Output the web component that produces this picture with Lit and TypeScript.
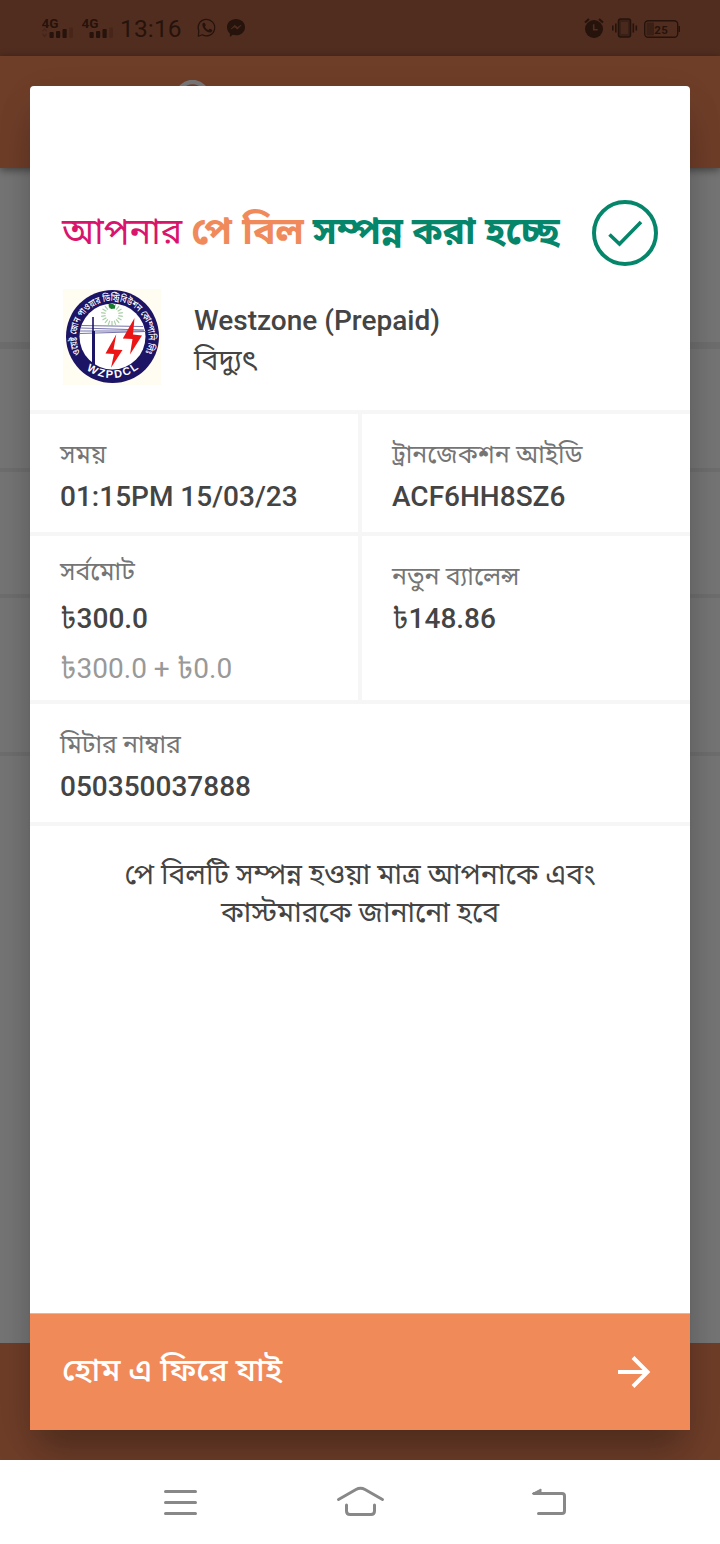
import { LitElement, html, css, svg } from "lit";
import { customElement, property } from "lit/decorators.js";

@customElement("signal-bars")
class SignalBars extends LitElement {
  @property({ type: Boolean }) marker = false;
  static styles = css`
    :host { display: block; width: 32px; height: 24px; }
    svg { display: block; }
    text { font: 700 13.5px Roboto, sans-serif; fill: #26130b; }
  `;
  render() {
    return html`<svg width="32" height="24" viewBox="0 0 32 24">
      <text x="-0.5" y="12" textLength="17" lengthAdjust="spacingAndGlyphs">4G</text>
      <g fill="#26130b">
        <rect x="7.500" y="16" width="4.200" height="6" rx="1" />
        <rect x="14" y="15" width="4.200" height="7" rx="1" />
        <rect x="20.500" y="13" width="4.200" height="9" rx="1" />
      </g>
      <rect x="27.300" y="11.500" width="3.600" height="10.500" rx="1" fill="#472619" />
      ${this.marker ? svg`<path d="M0.5 15l2-2 2 2M0.5 18l2 2.500 2-2.500" fill="none" stroke="#45251a" stroke-width="1.400"/>` : ""}
    </svg>`;
  }
}

@customElement("status-bar")
class StatusBar extends LitElement {
  static styles = css`
    :host { display: flex; height: 56px; box-sizing: border-box; padding: 0 40px 0 42px; background: #512d20; color: #26130b; font-family: Roboto, sans-serif; align-items: center; }
    .second { margin-left: 8px; }
    .time { font-size: 24.5px; line-height: 56px; margin-left: 6px; letter-spacing: 0.15px; padding-top: 2px; width: 64px; white-space: nowrap; }
    .chat { margin-left: 12px; display: block; }
    .alarm { margin-left: auto; display: block; }
    .num { font: 700 11.5px Roboto, sans-serif; fill: #26130b; }
  `;
  render() {
    return html`
      <signal-bars marker></signal-bars>
      <signal-bars class="second"></signal-bars>
      <div class="time">13:16</div>
      <svg class="chat" width="56" height="24" viewBox="0 0 56 24">
        <path d="M2 20.2l.5-5.3A8.3 8.3 0 1 1 6 18.8z" transform="translate(.3 0)" fill="none" stroke="#26130b" stroke-width="1.200" stroke-linejoin="round" />
        <path d="M5.6 7.7c.8-1.500 2.300-1.300 2.700-.2l.6 1.500c.2.7-.7 1.300-.8 1.700.6 1.500 2 2.600 3.500 3.200.6 0 1-1.300 1.700-1.200l1.900 1c.8.6-.2 2.400-1.300 2.700-3.800.8-9-4.700-8.300-8.700z" transform="translate(.8 0)" fill="#26130b" />
        <path transform="translate(-2 0)" d="M42 3c5.200 0 9 3.600 9 8.200s-3.800 8.100-9 8.100c-1.200 0-2.300-.2-3.300-.5L35.900 21v-3.500C34 16 33 13.800 33 11.200 33 6.600 36.800 3 42 3z" fill="#26130b" />
        <path transform="translate(-2 0)" d="M37 13l3.700-3.800 2.700 2.200 3.800-2.200-3.900 4-2.600-2.200z" fill="#512d20" stroke="#512d20" stroke-width=".6" />
      </svg>
      <svg class="alarm" width="96" height="24" viewBox="0 0 96 24">
        <circle cx="10" cy="13" r="9" fill="#26130b" />
        <path d="M1 6.500l4-3.500M19 6.500l-4-3.500" stroke="#26130b" stroke-width="2.200" />
        <path d="M9.700 8.300v5.500h4" fill="none" stroke="#512d20" stroke-width="1.600" />
        <rect x="34.500" y="3" width="12" height="18" rx="2" fill="#3a2016" stroke="#26130b" stroke-width="1.500" />
        <rect x="37" y="6" width="7" height="12" fill="#4a291d" />
        <path d="M31.800 7.500v9M28.800 9.500v5M49.300 7.500v9M52.300 9.500v5" stroke="#26130b" stroke-width="1.600" />
        <rect x="60.700" y="4.700" width="33" height="16.600" rx="3.500" fill="none" stroke="#26130b" stroke-width="1.400" />
        <rect x="62.500" y="6.500" width="7.500" height="13" rx="1" fill="#3b2016" />
        <path d="M95.300 10v6" stroke="#26130b" stroke-width="1.500" />
        <text class="num" x="70.300" y="17.500" textLength="13.500">25</text>
      </svg>
    `;
  }
}

@customElement("biller-logo")
class BillerLogo extends LitElement {
  static styles = css`
    :host { display: block; width: 98px; height: 96px; background: #fffcf1; }
    svg { display: block; }
    .bn { font: 500 10px "Noto Sans Bengali", "Noto Sans", sans-serif; fill: #fff; }
    .en { font: 700 11px "Liberation Sans", sans-serif; fill: #fff; }
  `;
  render() {
    const rays = Array.from({ length: 18 }, (_, i) => i * 20);
    return html`<svg width="98" height="96" viewBox="0 0 98 96">
      <defs>
        <path id="top" d="M17.500 64.500A36 36 0 1 1 81.500 64.500" />
        <path id="bottom" d="M17.500 75.500A43 43 0 0 0 80 75.500" />
      </defs>
      <circle cx="49.500" cy="47.500" r="46.500" fill="#1c1464" />
      <circle cx="49.500" cy="47.500" r="33" fill="#fff" />
      ${rays.map((a) => svg`<path d="M49 14.500v4.500" transform=${`rotate(${a} 49 25.500)`} stroke="#a7cfa5" stroke-width="1.200"/>`)}
      <path d="M46 15h4l2 1.500v3l-4 .5-2-2z" fill="#157a2d" />
      <g stroke="#6462a0" stroke-width=".9">
        <path d="M18 36.500l62 1M18 39l63 2M17 42h64M17 44.500l66-2" />
      </g>
      <path d="M30 28v50" stroke="#1c1464" stroke-width="1.600" />
      <path d="M30.500 42v36" stroke="#1c1464" stroke-width="3" />
      <path d="M53.300 45.200L42.500 64.500l8.500.5-3 13.800L59.500 61l-9-.5zM71.500 29L59.800 49.500l9.700.5-2.500 15.500L79 46.500l-9-1z" fill="#ec1515" />
      <text class="bn"><textPath href="#top" textLength="146" lengthAdjust="spacingAndGlyphs">ওয়েষ্ট জোন পাওয়ার ডিস্ট্রিবিউশন কোম্পানি লিঃ</textPath></text>
      <text class="en"><textPath href="#bottom" startOffset="8" textLength="56">WZPDCL</textPath></text>
    </svg>`;
  }
}

@customElement("info-cell")
class InfoCell extends LitElement {
  @property() label = "";
  @property() value = "";
  @property() note = "";
  static styles = css`
    :host { display: block; box-sizing: border-box; padding-left: 30px; background: #fff; white-space: nowrap; font-family: Roboto, "Noto Sans Bengali", "Noto Sans", sans-serif; }
    .label { font-size: 24.9px; line-height: 32px; height: 32px; color: #757575; margin-top: 25px; }
    :host([note]) .label { margin-top: 20px; margin-bottom: 13px; }
    .value { font-size: 28px; font-weight: 500; line-height: 36px; height: 36px; color: #444; margin-top: 8px; }
    :host([note]) .value { margin-top: 9px; }
    .note { font-size: 28px; line-height: 36px; height: 36px; color: #999; margin-top: 14px; }
    .taka { font-family: "Noto Sans Bengali", "Noto Sans", sans-serif; font-weight: 400; }
  `;
  money(text: string) {
    return text.split(/(৳)/).map((part) => (part === "৳" ? html`<span class="taka">৳</span>` : part));
  }
  render() {
    return html`<div class="label">${this.label}</div>
      <div class="value">${this.money(this.value)}</div>
      ${this.note ? html`<div class="note">${this.money(this.note)}</div>` : ""}`;
  }
}

@customElement("app-root")
class AppRoot extends LitElement {
  static styles = css`
    :host { display: flex; flex-direction: column; position: relative; width: 720px; height: 1544px; background: #fff; overflow: hidden; font-family: Roboto, "Noto Sans Bengali", "Noto Sans", sans-serif; }
    .appbar { position: relative; height: 112px; background: #6f3e29; flex: none; box-shadow: 0 2px 8px rgba(0,0,0,.45); box-sizing: border-box; padding: 24px 0 0 174px; }
    .appbar svg { display: block; }
    .page { flex: 1; display: grid; grid-template-rows: 181px 123px 126px 158px 1fr; background: #757575; }
    .band { border-bottom: 4px solid #6e6e6e; }
    .band:first-child { border-bottom-width: 7px; }
    .band:last-child { border-bottom: 0; }
    .footer { height: 117px; background: #6f3e29; flex: none; }
    .nav { height: 84px; flex: none; background: #fff; }
    .nav svg { display: block; }
    .layer { position: absolute; inset: 0 0 84px 0; overflow: hidden; padding: 86px 30px 30px; box-sizing: border-box; }
    .dialog { height: 1344px; background: #fff; border-radius: 4px 4px 0 0; box-shadow: 0 26px 36px -6px rgba(0,0,0,.27), 0 10px 40px rgba(0,0,0,.06); display: flex; flex-direction: column; }
    .title { display: flex; justify-content: space-between; align-items: center; height: 68px; margin: 113px 32px 0; }
    .heading { margin: 0; font-size: 36px; line-height: 48px; font-weight: 400; white-space: nowrap; color: #d8156b; padding-bottom: 4px; }
    .pay, .done { font-size: 37.4px; font-weight: 700; }
    .pay { color: #f08a5b; word-spacing: 1px; }
    .done { color: #05866a; }
    .biller { display: flex; height: 143px; box-sizing: border-box; padding: 22px 0 0 33px; gap: 33px; }
    .names { color: #444; font-size: 28px; padding-top: 14px; white-space: nowrap; }
    .name { font-weight: 500; line-height: 36px; height: 36px; }
    .kind { line-height: 38px; height: 38px; margin-top: 3px; font-size: 28.3px; }
    .grid { display: grid; grid-template-columns: 328px 328px; grid-template-rows: 118px 164px 118px; gap: 4px; background: #f6f6f6; border-top: 4px solid #f6f6f6; border-bottom: 4px solid #f6f6f6; }
    .wide { grid-column: 1 / 3; }
    .message { margin: 30px 60px 0; font-size: 28.3px; line-height: 38px; text-align: center; color: #444; white-space: nowrap; }
    .home { margin-top: auto; height: 117px; box-sizing: border-box; border-top: 1px solid #f5b08f; background: #f18a59; color: #fff; display: flex; align-items: center; justify-content: space-between; padding: 0 38px 0 32px; font-size: 32.5px; font-weight: 500; white-space: nowrap; }
  `;
  render() {
    return html`
      <status-bar></status-bar>
      <div class="appbar">
        <svg width="40" height="20" viewBox="0 0 40 20"><circle cx="18.500" cy="17" r="15" fill="none" stroke="#777" stroke-width="4.500" /></svg>
      </div>
      <div class="page">
        <div class="band"></div><div class="band"></div><div class="band"></div><div class="band"></div><div class="band"></div>
      </div>
      <div class="footer"></div>
      <div class="nav">
        <svg width="720" height="84" viewBox="0 0 720 84" fill="none" stroke="#888" stroke-width="3" stroke-linecap="round" stroke-linejoin="round">
          <path d="M165.500 31.500h30M165.500 42.500h30M165.500 53.500h30" />
          <path d="M338.500 39.500l17.500-10q4.500-2.500 9 0l17.500 10M346.500 45v6q0 3.500 3.500 3.500h21q3.500 0 3.500-3.500v-6" />
          <path d="M534 33.500h28q2.500 0 2.500 2.500v15q0 2.500-2.500 2.500h-23.500" />
          <path d="M532.500 33.500l8.500-4.500v4.500z" fill="#888" stroke-width="1" />
        </svg>
      </div>
      <div class="layer">
        <div class="dialog">
          <div class="title">
            <h1 class="heading">আপনার <span class="pay">পে বিল</span> <span class="done">সম্পন্ন করা হচ্ছে</span></h1>
            <svg width="66" height="66" viewBox="0 0 66 66" fill="none" stroke="#05866a">
              <circle cx="33" cy="33" r="31" stroke-width="4" />
              <path d="M17.500 34.500l10 9.500L49 22" stroke-width="3.600" />
            </svg>
          </div>
          <div class="biller">
            <biller-logo></biller-logo>
            <div class="names">
              <div class="name">Westzone (Prepaid)</div>
              <div class="kind">বিদ্যুৎ</div>
            </div>
          </div>
          <div class="grid">
            <info-cell label="সময়" value="01:15PM 15/03/23"></info-cell>
            <info-cell label="ট্রানজেকশন আইডি" value="ACF6HH8SZ6"></info-cell>
            <info-cell label="সর্বমোট" value="৳300.0" note="৳300.0 + ৳0.0"></info-cell>
            <info-cell label="নতুন ব্যালেন্স" value="৳148.86"></info-cell>
            <info-cell class="wide" label="মিটার নাম্বার" value="050350037888"></info-cell>
          </div>
          <div class="message">পে বিলটি সম্পন্ন হওয়া মাত্র আপনাকে এবং<br />কাস্টমারকে জানানো হবে</div>
          <div class="home">
            <span>হোম এ ফিরে যাই</span>
            <svg width="34" height="34" viewBox="0 0 34 34" fill="none" stroke="#fff" stroke-width="4"><path d="M0 17h30M15 2.500L29.500 17 15 31.500" /></svg>
          </div>
        </div>
      </div>
    `;
  }
}
